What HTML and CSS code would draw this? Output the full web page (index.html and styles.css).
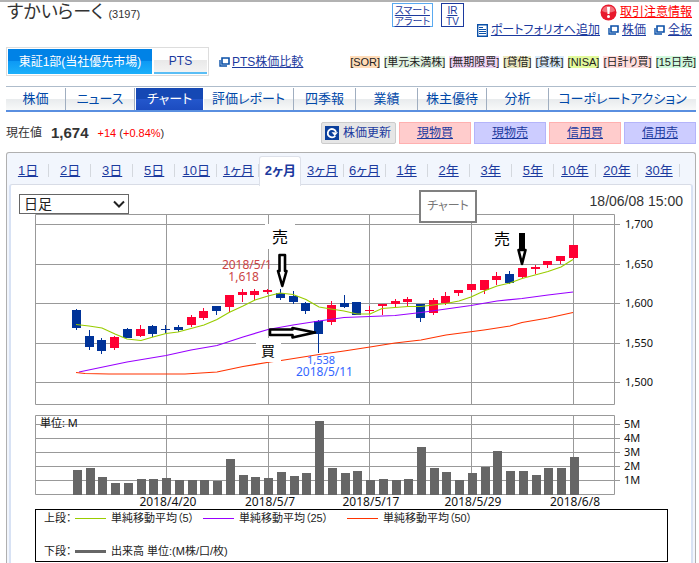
FILE: index.html
```html
<!DOCTYPE html>
<html lang="ja">
<head>
<meta charset="utf-8">
<title>すかいらーく (3197)</title>
<link rel="stylesheet" href="styles.css">
</head>
<body>
<svg class="defs" width="0" height="0" aria-hidden="true">
  <symbol id="win" viewBox="0 0 11 10"><path d="M3 1H10V7H3Z" fill="#fff" stroke="#0b50a8" stroke-width="1.6"/><path d="M1 3V9H8" fill="none" stroke="#0b50a8" stroke-width="1.4"/></symbol>
</svg>
<header class="header">
  <h1 class="name">すかいらーく <small>(3197)</small></h1>
  <div class="boxes">
    <a class="box light" href="#">スマート<br>アラート</a>
    <a class="box" href="#">IR<br>TV</a>
  </div>
  <div class="tools">
    <div class="toolrow">
      <svg width="17" height="17" viewBox="0 0 17 17"><circle cx="8.5" cy="8.5" r="8" fill="#e8192c"/><path d="M2 7a6.6 6 0 0 1 13 0Q8 10 2 7Z" fill="#f2707a"/><path d="M7 3h3l-.5 7h-2Z" fill="#fff"/><circle cx="8.5" cy="12.5" r="1.5" fill="#fff"/></svg>
      <a class="warn" href="#">取引注意情報</a>
    </div>
    <div class="toolrow">
      <svg width="11" height="13" viewBox="0 0 11 13"><path d="M.7.7H10.3V12.3H.7Z" fill="#fff" stroke="#0b50a8" stroke-width="1.4"/><path d="M2 3.5H6M2 5.5H9M2 7.5H9M2 9.5H9" stroke="#0b50a8"/></svg>
      <a href="#">ポートフォリオへ追加</a>
      <svg class="sp" width="11" height="10"><use href="#win"/></svg><a href="#">株価</a>
      <svg class="sp" width="11" height="10"><use href="#win"/></svg><a href="#">全板</a>
    </div>
  </div>
</header>

<div class="market">
  <div class="markettabs">
    <button class="mt on" type="button">東証1部(当社優先市場)</button>
    <button class="mt" type="button">PTS</button>
  </div>
  <svg width="11" height="10"><use href="#win"/></svg>
  <a class="compare" href="#">PTS株価比較</a>
  <div class="tags">
    <span class="tag t1">[SOR]</span><span class="tag t2">[単元未満株]</span><span class="tag t3">[無期限買]</span><span class="tag t4">[貸借]</span><span class="tag t5">[貸株]</span><span class="tag t6">[NISA]</span><span class="tag t7">[日計り買]</span><span class="tag t8">[15日売]</span>
  </div>
</div>

<nav class="nav">
  <a href="#">株価</a><a href="#">ニュース</a><a class="on" href="#">チャート</a><a href="#">評価レポート</a><a href="#">四季報</a><a href="#">業績</a><a href="#">株主優待</a><a href="#">分析</a><a href="#">コーポレートアクション</a>
</nav>

<div class="quote">
  <span>現在値</span><strong>1,674</strong><span class="chg"><i>+14</i> (<i>+0.84%</i>)</span>
  <div class="actions">
    <button class="refresh" type="button"><svg width="14" height="14" viewBox="0 0 14 14"><path d="M0 0H14V14H0Z" fill="#0b3f9c"/><path d="M10.3 9.8A4.2 4.2 0 1 1 11 6" fill="none" stroke="#fff" stroke-width="1.8"/><path d="M6.5 6.3H13L9.8 10Z" fill="#fff"/></svg>株価更新</button>
    <a class="buy" href="#">現物買</a><a class="sell" href="#">現物売</a><a class="buy" href="#">信用買</a><a class="sell" href="#">信用売</a>
  </div>
</div>

<main class="panel">
  <nav class="periods">
    <a href="#">1日</a><a href="#">2日</a><a href="#">3日</a><a href="#">5日</a><a href="#">10日</a><a href="#">1ヶ月</a><a class="on" href="#">2ヶ月</a><a href="#">3ヶ月</a><a href="#">6ヶ月</a><a href="#">1年</a><a href="#">2年</a><a href="#">3年</a><a href="#">5年</a><a href="#">10年</a><a href="#">20年</a><a href="#">30年</a>
  </nav>
  <section class="body">
    <div class="bar">
      <div class="pick">
        <select aria-label="足種"><option>日足</option></select>
        <svg width="12" height="8" viewBox="0 0 12 8"><path d="M1 1.5L6 6.5L11 1.5" fill="none" stroke="#222" stroke-width="2"/></svg>
      </div>
      <time>18/06/08 15:00</time>
      <span class="tip">チャート</span>
    </div>
    <svg id="chart" class="chart" viewBox="11 214 680 295" role="img" aria-label="株価チャート"></svg>
    <div class="legend">
      <div class="lrow"><span>上段：</span><span class="key ma5">単純移動平均（5）</span><span class="key ma25">単純移動平均（25）</span><span class="key ma50">単純移動平均（50）</span></div>
      <div class="lrow"><span>下段：</span><span class="key vol">出来高 単位:(M株/口/枚)</span></div>
    </div>
  </section>
</main>
<script src="chart.js"></script>
</body>
</html>
```
FILE: styles.css
```css
* { box-sizing: border-box; }
body {
  margin: 0;
  min-height: 100vh;
  display: flex;
  flex-direction: column;
  border-top: 2px solid #b2b2b2;
  background: #fff;
  color: #333;
  font: 12px/14px "Liberation Sans", "Noto Sans CJK JP", sans-serif;
  font-feature-settings: "palt";
}
a { color: #1c3a9e; }
button, select { font: inherit; font-feature-settings: inherit; margin: 0; }
svg { flex: none; }
.defs { position: absolute; }

.header { display: flex; height: 45px; padding: 1px 7px 0; }
.name { margin: 0; font-size: 18px; line-height: 18px; font-weight: 400; flex: 1; }
.name small { font-size: 11px; }
.boxes { display: flex; gap: 8px; align-items: flex-start; margin-right: 13px; }
.box { height: 24px; border: 1px solid #1c3a9e; padding: 1px 4px; font-size: 10px; line-height: 11px; text-align: center; }
.box.light { border-color: #5aaaf0; padding: 1px 2px; }
.tools { display: flex; flex-direction: column; align-items: flex-end; }
.toolrow { display: flex; align-items: center; gap: 3px; height: 18px; }
.toolrow .sp { margin-left: 5px; }
.warn { color: #f00; }

.market { display: flex; align-items: center; height: 29px; padding: 0 3px 0 6px; }
.markettabs { display: flex; width: 203px; height: 29px; border: 1px solid #ddd; padding: 1px; margin-right: 10px; }
.mt { border: 0; padding: 0; flex: 1; font-size: 12px; color: #1c3a9e; border-bottom: 2px solid #5abef5; background: linear-gradient(#fff 50%, #e9e9e9 50%, #f3f3f3); margin-left: 2px; }
.mt.on { flex: none; width: 144px; margin: 0; border: 0; color: #fff; background: linear-gradient(#0082e6 50%, #0d9af5 50%, #1cb0fa); }
.compare { margin-left: 2px; }
.tags { display: flex; gap: 4px; margin-left: auto; font-size: 11px; line-height: 12px; color: #222; white-space: nowrap; }
.t1 { background: #ffdcb8; }
.t2 { background: #e2f3e2; }
.t3 { background: #f0d4f4; }
.t4 { background: #ece8c0; }
.t5 { background: #d8eafa; }
.t6 { background: #e2fa9c; }
.t7 { background: #ffdcdc; }
.t8 { background: #d0f8dc; }

.nav { display: grid; grid-template-columns: 60fr 69fr 69fr 90fr 62fr 62fr 69fr 62fr 147fr; margin: 10px 3px 0 6px; height: 26px; border-top: 1px solid #aebccb; border-bottom: 2px solid #5a8fe0; padding-top: 1px; }
.nav a { display: flex; align-items: center; justify-content: center; font-size: 13px; text-decoration: none; color: #0048a8; border-right: 1px solid #a0aec0; background: linear-gradient(#fff 50%, #e8ebed 50%, #f8f9f9); white-space: nowrap; }
.nav a:last-child { border-right: 0; }
.nav a.on { background: linear-gradient(#1548b4 50%, #2457cc 50%, #1c4cc0); color: #fff; margin: 0 1px; border: 0; }

.quote { display: flex; align-items: center; height: 22px; margin: 10px 3px 8px 6px; }
.quote strong { font-size: 15px; margin: 0 9px; }
.chg { font-size: 11px; }
.chg i { font-style: normal; color: #f00; }
.actions { display: flex; gap: 3px; margin-left: auto; height: 22px; }
.actions a { width: 72px; border: 1px solid; text-align: center; line-height: 20px; }
.actions .buy { background: #fcc; border-color: #ffb0b0; }
.actions .sell { background: #ccf; border-color: #b4b4fa; }
.refresh { display: flex; align-items: center; gap: 4px; width: 75px; border: 1px solid #ccc; border-radius: 2px; background: #e6e6e6; padding: 0 3px; color: #1c3a9e; white-space: nowrap; }

.panel { flex: 1; display: flex; flex-direction: column; margin: 0 3px 0 6px; border: 1px solid #b0b0b0; border-bottom: 0; border-radius: 3px 3px 0 0; background: #f2f6fd; }
.periods { display: grid; grid-template-columns: repeat(16, 1fr); margin-right: 15px; height: 31px; padding-top: 3px; }
.periods a { position: relative; display: flex; align-items: center; justify-content: center; font-size: 13px; padding-top: 1px; }
.periods a::after { content: ""; position: absolute; right: 0; top: 8px; height: 13px; border-right: 1px solid #d4d8de; }
.periods .on { z-index: 1; margin: 0 0 -2px; background: #fff; border: 1px solid #dde1ea; border-bottom: 0; border-radius: 3px 3px 0 0; font-weight: 700; text-decoration: none; padding-bottom: 2px; }
.periods .on::after { display: none; }
.body { flex: 1; margin: 0 2px; border: 2px solid #d8e2f4; border-top: 1px solid #d8dce6; border-bottom: 0; background: #fff; border-radius: 3px 3px 0 0; }
.bar { position: relative; display: flex; justify-content: space-between; height: 29px; padding: 9px 8px 0; }
.pick { position: relative; height: 20px; }
.pick select { appearance: none; width: 110px; height: 20px; border: 1px solid #666; border-radius: 0; background: #fff; padding: 0 4px; font-size: 14px; line-height: 16px; color: #222; }
.pick svg { position: absolute; right: 4px; top: 6px; pointer-events: none; }
.bar time { font-size: 14px; }
.tip { position: absolute; left: 60%; top: 5px; width: 58px; height: 33px; border: 2px solid #808080; background: #fff; color: #777; line-height: 29px; text-align: center; z-index: 1; }
.chart { display: block; width: 100%; font-family: "Noto Sans", "Noto Sans CJK JP", sans-serif; font-size: 11px; }
.chart .big { font-size: 12px; }
.legend { margin: 0 23px 0 24px; height: 53px; border: 1px solid #000; padding: 0 8px; display: flex; flex-direction: column; justify-content: space-between; font-size: 11px; color: #222; white-space: nowrap; }
.lrow { display: grid; grid-template-columns: 31px 128px 144px auto; line-height: 17px; }
.lrow:last-child { grid-template-columns: 31px auto; line-height: 20px; }
.key { display: flex; align-items: center; gap: 5px; }
.key::before { content: ""; flex: none; width: 31px; border-top: 1px solid #9c0; }
.ma25::before { border-color: #90f; }
.ma50::before { border-color: #f30; }
.vol::before { border-top: 3px solid #666; }
```
FILE: chart.js
```js
// Candles: body top, body bottom, wick top, wick bottom, direction
const candles = [
  [310,328,309,330,'b'],[336,347,330,350,'b'],[340,351,338,354,'b'],[337,348,336,350,'r'],
  [329,338,328,338,'b'],[329,336,325,337,'r'],[326,334,325,337,'b'],[329,330,325,333,'b'],
  [327,330,325,332,'b'],[317,325,315,327,'r'],[311,318,308,320,'r'],[306,311,306,315,'b'],
  [295,307,295,312,'r'],[292,295,289,302,'r'],[291,295,289,300,'r'],[290,292,289,294,'r'],
  [293,298,289,300,'b'],[296,302,291,304,'b'],[303,311,302,314,'b'],[321,334,320,353,'b'],
  [305,322,301,325,'r'],[303,307,295,308,'b'],[302,315,302,315,'b'],[310,311,306,314,'r'],
  [304,306,304,315,'r'],[301,304,299,307,'r'],[299,302,297,306,'r'],[304,318,304,322,'b'],
  [300,313,298,315,'r'],[296,303,292,305,'r'],[290,293,290,296,'r'],[284,290,284,292,'r'],
  [280,290,280,294,'r'],[276,280,272,285,'r'],[274,283,271,284,'b'],[268,277,268,278,'r'],
  [267,269,265,274,'r'],[261,265,261,268,'r'],[256,261,256,264,'r'],[245,258,245,259,'r']
];
const volumes = [470,468,477,483,483,479,479,478,480,480,480,481,459,475,477,478,472,476,473,421,
  468,473,471,480,479,480,479,447,468,472,480,473,467,451,471,471,475,468,468,457];
const verticals = [[166,'2018/4/20'],[268,'2018/5/7'],[369,'2018/5/17'],[471,'2018/5/29'],[573,'2018/6/8']];
const prices = [[224,'1,700'],[264,'1,650'],[303,'1,600'],[343,'1,550'],[382,'1,500']];
const units = [[424,'5M'],[438,'4M'],[452,'3M'],[466,'2M'],[480,'1M']];

const rect = (x, y, w, h, c) => `<rect x="${x}" y="${y}" width="${w}" height="${h}" fill="${c}"/>`;
const text = (x, y, s, c = '#111', a = 'start', k = '') =>
  `<text x="${x}" y="${y}" fill="${c}" text-anchor="${a}" class="${k}">${s}</text>`;
const line = (pts, c) => `<polyline points="${pts}" fill="none" stroke="${c}" stroke-width="1.2"/>`;
const centre = i => Math.round(76 + i * 12.74);
const G = '#999';
let out = '';

for (const [y, s] of [...prices, ...units]) {
  out += rect(35, y, 585, 1, G) + text(s.endsWith('M') ? 624 : 625, y + 4, s);
}
for (const [x, s] of verticals) {
  out += rect(x, 214, 1, 190, G) + rect(x, 415, 1, 79, G) + text(x + 2, 506, s, '#111', 'middle', 'big');
}
out += `<path d="M35.5 214.5H614.5V404.5H35.5ZM35.5 415.5H614.5V494.5H35.5Z" fill="none" stroke="${G}"/>`;
out += text(40, 427, '単位: M');
volumes.forEach((y, i) => { out += rect(centre(i) - 3, y, 9, 495 - y, '#666'); });

out += '<text fill="#cc4444" text-anchor="end" class="big"><tspan x="272" y="269">2018/5/1</tspan><tspan x="259" y="281">1,618</tspan></text>';
candles.forEach(([t, b, wt, wb, d], i) => {
  const c = d === 'r' ? '#ff0033' : '#003399';
  out += rect(centre(i) - 4, t, 9, b - t, c) + rect(centre(i), wt, 1, wb - wt, c);
});
out += line('76,324.5 89,326 102,328 115,334 127,339 141,340.5 153,337 166,333.5 178,332 191,328.5 204,325 217,319.5 229,312.5 243,306 255,300 268,296 280,293 293,294.5 306,299.5 319,307 331,309 344,311 357,314 370,314 382,308.5 395,307.5 408,306.5 421,306.5 433,305 446,303.5 459,301 471,297 484,291 497,286 510,283 522,278.5 535,275 548,271.5 561,267 573,259.5', '#9c0');
out += line('79,372 127,362 166,355.5 191,350 217,345.5 243,337 268,329.5 293,325 319,321 344,317.5 370,316.5 395,315.5 421,312.5 446,309 471,305.5 497,301 522,298.5 548,295 573,292', '#90f');
out += line('76,372.5 85,373.5 109,374 185,374 217,372 243,366.5 270,362 281,360.5 319,354.5 344,351 370,347 395,343 421,340 446,335 484,330 510,326 522,322.5 548,318 573,312.5', '#f30');

// Buy and sell notes
out += rect(265, 224, 30, 25, '#fff') + rect(256, 338, 25, 24, '#fff');
out += `<g font-size="16">${text(272, 243, '売', '#000')}${text(494, 245, '売', '#000')}</g>`;
out += `<g font-size="14">${text(261, 356, '買', '#000')}</g>`;
out += '<text fill="#3366ff"><tspan x="307" y="364">1,538</tspan><tspan x="296" y="376" class="big">2018/5/11</tspan></text>';
out += '<g fill="#fff" stroke="#000" stroke-width="2.6" stroke-linejoin="round">' +
  '<path d="M279.500 255H285V271H286.500L282.300 286L278 271H279.500Z"/>' +
  '<path d="M270 329.500H292.500V328L315 332.500L292.500 337.500V335H270Z"/>' +
  '<path d="M518.500 250H525.500L522 264Z"/></g>' +
  rect(519, 233, 6, 18, '#000');
document.getElementById('chart').innerHTML = out;
```
